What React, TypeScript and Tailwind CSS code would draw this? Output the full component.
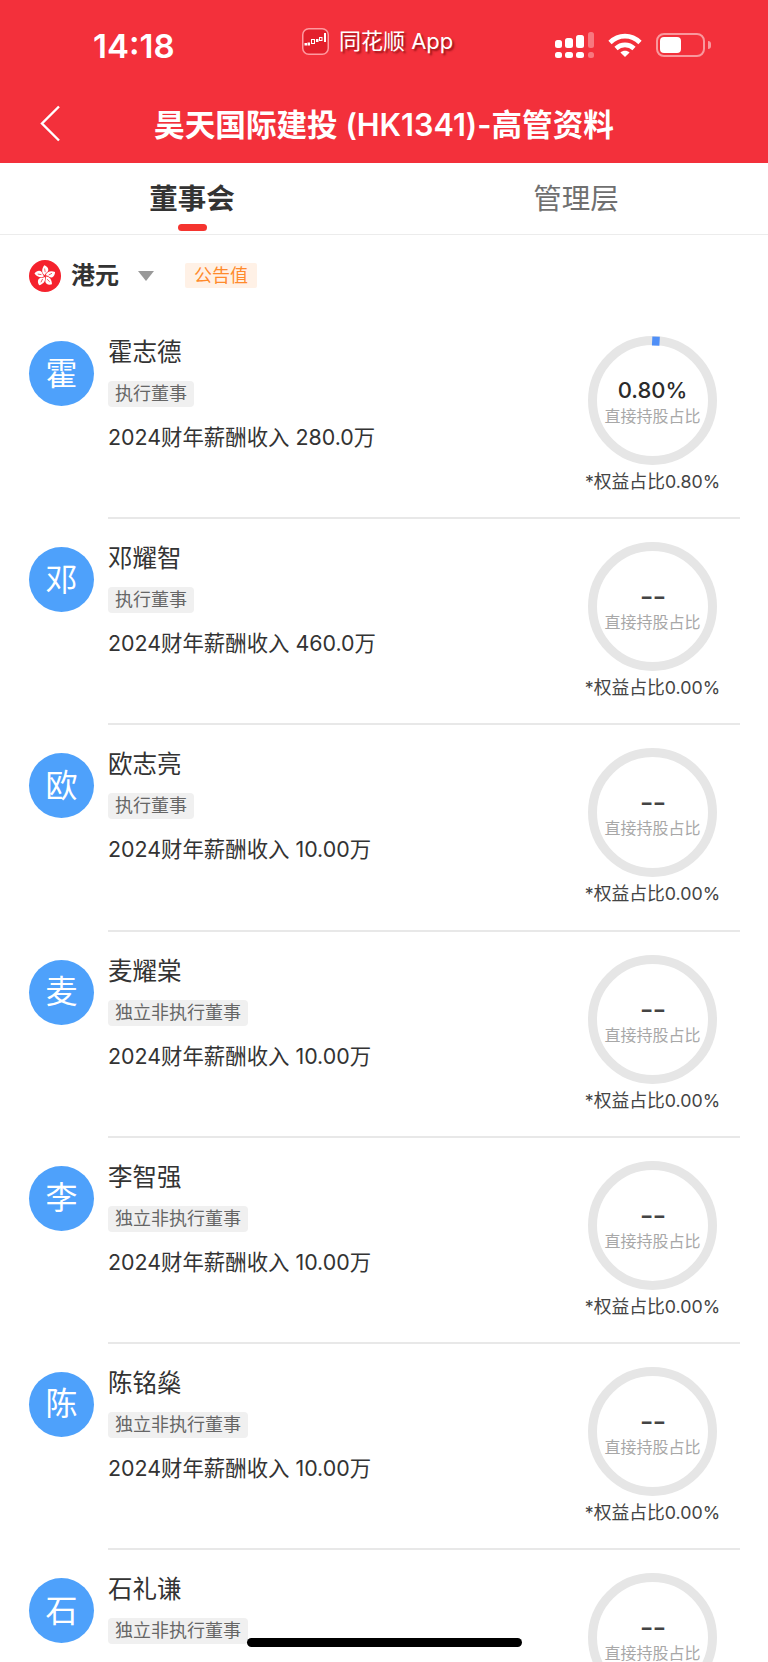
const people = [
  { name: "霍志德", role: "执行董事", pay: "280.0万", hold: "0.80%", equity: "0.80%" },
  { name: "邓耀智", role: "执行董事", pay: "460.0万", hold: "--", equity: "0.00%" },
  { name: "欧志亮", role: "执行董事", pay: "10.00万", hold: "--", equity: "0.00%" },
  { name: "麦耀棠", role: "独立非执行董事", pay: "10.00万", hold: "--", equity: "0.00%" },
  { name: "李智强", role: "独立非执行董事", pay: "10.00万", hold: "--", equity: "0.00%" },
  { name: "陈铭燊", role: "独立非执行董事", pay: "10.00万", hold: "--", equity: "0.00%" },
  { name: "石礼谦", role: "独立非执行董事", pay: "10.00万", hold: "--", equity: "0.00%" },
];

const Signal = () => (
  <svg width="40" height="26" viewBox="0 0 40 26" fill="white">
    <rect x="0" y="8" width="7" height="8" rx="2.5" />
    <rect x="10" y="6" width="8" height="10" rx="2.5" />
    <rect x="21" y="3" width="8" height="13" rx="2.5" />
    <rect x="33" y="0" width="6" height="16" rx="2.5" opacity="0.35" />
    <rect x="0" y="20" width="7" height="6" rx="2.5" />
    <rect x="10" y="20" width="8" height="6" rx="2.5" />
    <rect x="21" y="20" width="8" height="6" rx="2.5" />
    <rect x="33" y="20" width="6" height="6" rx="2.5" opacity="0.35" />
  </svg>
);

const Wifi = () => (
  <svg width="34" height="24" viewBox="0 0 34 24" fill="none" stroke="white" strokeWidth="4.6">
    <path d="M2 9.5C10.5 1 23.5 1 32 9.5" />
    <path d="M8 15.5C13 10.7 21 10.7 26 15.5" />
    <path d="M17 24L12.4 19.4C15 17.2 19 17.2 21.6 19.4Z" fill="white" stroke="none" />
  </svg>
);

const Battery = () => (
  <div className="flex items-center">
    <div className="w-[49px] h-[24px] rounded-[8px] border-2 border-white/50 p-[2px]">
      <div className="w-[21px] h-full rounded-[4px] bg-white" />
    </div>
    <div className="ml-[3px] w-[3px] h-[8px] rounded-r-full bg-white/50" />
  </div>
);

const AppIcon = () => (
  <svg width="27" height="27" viewBox="0 0 27 27" fill="none">
    <rect x="0.75" y="0.75" width="25.5" height="25.5" rx="6" fill="#e3202c" stroke="#ff9aa0" strokeWidth="1.5" />
    <rect x="2.5" y="15" width="2.5" height="2.5" fill="white" />
    <rect x="5.5" y="14.5" width="2.5" height="3" fill="white" />
    <rect x="9.5" y="11.5" width="3" height="4" fill="none" stroke="white" strokeWidth="1" />
    <rect x="14" y="11" width="2.5" height="3" fill="white" />
    <rect x="17.5" y="9.5" width="2.5" height="3" fill="none" stroke="white" strokeWidth="1" />
    <rect x="22" y="5" width="2" height="9" fill="white" />
  </svg>
);

const Flag = () => (
  <svg width="32" height="32" viewBox="0 0 32 32">
    <circle cx="16" cy="16" r="16" fill="#f5222d" />
    {[0, 72, 144, 216, 288].map((a) => (
      <g key={a} transform={`rotate(${a} 16 16)`}>
        <path d="M15.6 15.2C12.6 13 12.4 9.2 15.2 5.2C18.8 6.4 20.2 9.4 18.8 11.6C17.8 12.8 16.4 13.4 15.6 15.2Z" fill="white" />
        <path d="M15.6 8.5L16.2 12.2" stroke="#f5222d" strokeWidth="0.7" />
      </g>
    ))}
  </svg>
);

const Ring = ({ hold }: { hold: string }) => (
  <div className="relative w-[129px] h-[129px]">
    <svg width="129" height="129" viewBox="0 0 129 129" fill="none">
      <circle cx="64.5" cy="64.5" r="60" stroke="#e6e6e6" strokeWidth="9" />
      {hold !== "--" && <rect x="61" y="0.5" width="7.5" height="9" fill="#4f8ff7" transform="rotate(3 64.5 64.5)" />}
    </svg>
    <div className="absolute inset-0 flex flex-col items-center pt-[39px]">
      <div className="h-[30px] leading-[30px] text-[22px] font-medium text-[#2b2b2b]">
        {hold === "--" ? <span className="text-[30px] font-normal tracking-[-1px] text-[#444]">--</span> : hold}
      </div>
      <div className="h-[22px] leading-[22px] text-[16px] text-[#a8a8a8]">直接持股占比</div>
    </div>
  </div>
);

export default function App() {
  return (
    <div className="relative h-[1662px] overflow-hidden bg-white font-['Inter','Noto_Sans_CJK_SC',sans-serif] text-[#333]">
      <div className="h-[163px] bg-[#f3303b] text-white">
        <div className="flex h-[92px] items-start">
          <div className="ml-[93px] mt-[27px] w-[209px] text-[33px] leading-[38px] font-semibold">14:18</div>
          <div className="mt-[27px] flex items-center">
            <AppIcon />
            <span className="ml-[10px] text-[22px] leading-[28px] text-white [text-shadow:2px_2px_2px_rgba(90,0,0,0.6)]">同花顺 App</span>
          </div>
          <div className="ml-auto mr-[57px] mt-[32px] flex items-center">
            <Signal />
            <div className="ml-[13px]"><Wifi /></div>
            <div className="ml-[14px]"><Battery /></div>
          </div>
        </div>
        <div className="relative flex h-[66px] items-center justify-center">
          <svg className="absolute left-[39px] top-[13px]" width="22" height="37" viewBox="0 0 22 37" fill="none" stroke="white" strokeWidth="2.4">
            <path d="M20 1.5L3 18.5L20 35.5" />
          </svg>
          <div className="text-[30.6px] font-semibold leading-[40px]">昊天国际建投 (HK1341)-高管资料</div>
        </div>
      </div>

      <div className="flex h-[72px] border-b border-[#ececec]">
        <div className="relative flex w-1/2 justify-center pt-[17px] text-[28.5px] leading-[38px] font-bold text-[#333]">
          董事会
          <div className="absolute left-[178px] top-[61px] h-[7px] w-[29px] rounded-full bg-[#f5342f]" />
        </div>
        <div className="flex w-1/2 justify-center pt-[17px] text-[28.5px] leading-[38px] text-[#707070]">管理层</div>
      </div>

      <div className="flex h-[78px] items-center pl-[29px] pt-[3px]">
        <Flag />
        <span className="ml-[10px] text-[24px] font-bold leading-[32px] text-[#333]">港元</span>
        <span className="ml-[19px] h-0 w-0 border-x-[8px] border-t-[10px] border-x-transparent border-t-[#999]" />
        <span className="ml-[31px] h-[25px] rounded-[2px] bg-[#fff1e6] px-[9px] text-[18px] leading-[25px] text-[#ff8a2b]">公告值</span>
      </div>

      {people.map((p) => (
        <div key={p.name} className="flex h-[206.2px] pl-[29px] pr-[28px]">
          <div className="mt-[28px] flex h-[65px] w-[65px] shrink-0 items-center justify-center rounded-full bg-[#4ea1fb] text-[32px] text-white">
            {p.name[0]}
          </div>
          <div className="ml-[14px] flex flex-1 justify-between border-b-2 border-[#e8e8e8]">
            <div className="pt-[22px]">
              <div className="h-[34px] text-[24.5px] leading-[34px] text-[#333]">{p.name}</div>
              <div className="mt-[12px] w-fit h-[26px] rounded-[4px] bg-[#f0f0f0] px-[7px] text-[18px] leading-[26px] text-[#666]">{p.role}</div>
              <div className="mt-[15px] h-[30px] text-[21.4px] leading-[30px] text-[#333]">2024财年薪酬收入 {p.pay}</div>
            </div>
            <div className="flex w-[175px] flex-col items-center pt-[23px]">
              <Ring hold={p.hold} />
              <div className="mt-[4px] h-[26px] whitespace-nowrap text-[17.8px] leading-[26px] text-[#444]">*权益占比{p.equity}</div>
            </div>
          </div>
        </div>
      ))}

      <div className="absolute left-[247px] top-[1638px] h-[9px] w-[275px] rounded-full bg-black" />
    </div>
  );
}
